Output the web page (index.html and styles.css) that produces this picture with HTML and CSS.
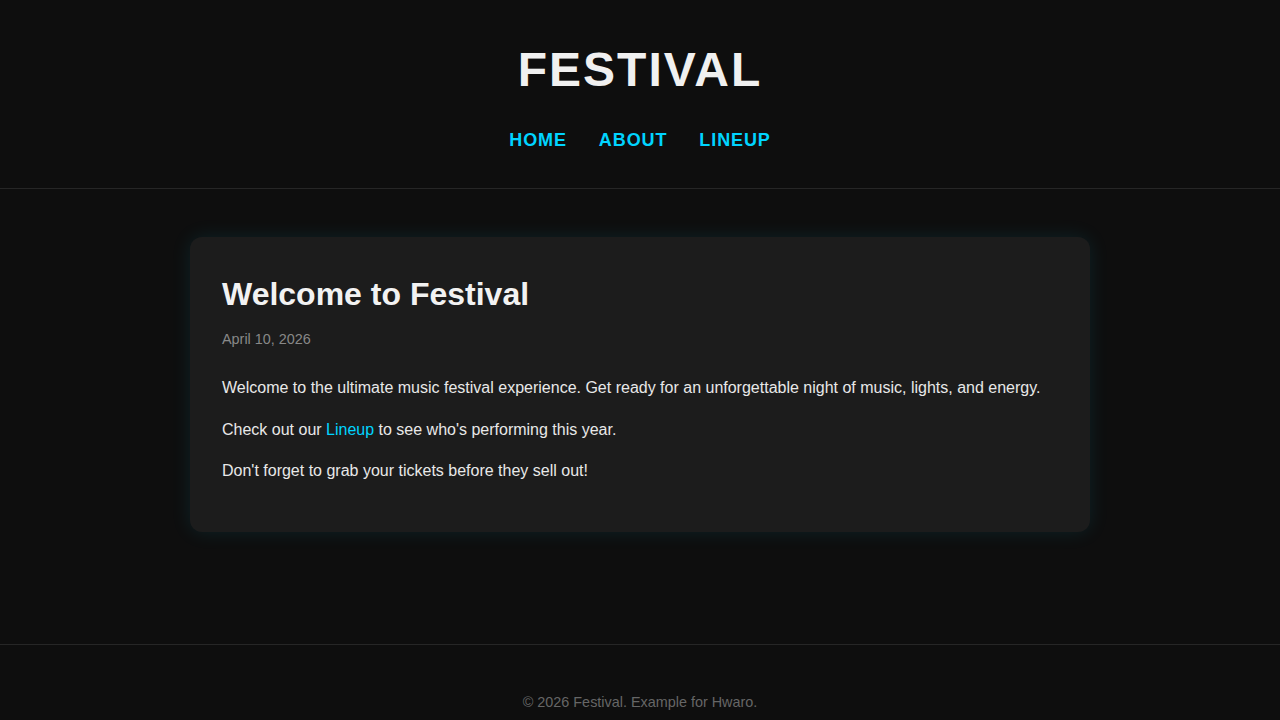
FILE: index.html
```html
<!DOCTYPE html>
<html lang="en">
<head>
  <meta charset="UTF-8">
  <title>Festival</title>
  <link rel="stylesheet" href="styles.css">
</head>
<body>
  <header class="site-header">
    <h1 class="logo">FESTIVAL</h1>
    <nav class="nav">
      <a href="#">HOME</a>
      <a href="#">ABOUT</a>
      <a href="#">LINEUP</a>
    </nav>
  </header>

  <main class="content">
    <article class="card">
      <h1>Welcome to Festival</h1>
      <div class="date">April 10, 2026</div>
      <p>Welcome to the ultimate music festival experience. Get ready for an unforgettable night of music, lights, and energy.</p>
      <p>Check out our <a href="#">Lineup</a> to see who's performing this year.</p>
      <p>Don't forget to grab your tickets before they sell out!</p>
    </article>
  </main>

  <footer class="site-footer">
    <p>&copy; 2026 Festival. Example for Hwaro.</p>
  </footer>
</body>
</html>
```

FILE: styles.css
```css
body {
  background-color: #0e0e0e;
  font-family: "Liberation Sans", Arial, sans-serif;
  color: #e8e8e8;
  line-height: 1.6;
  margin: 0;
}
a {
  color: #00d4ff;
  text-decoration: none;
}
.site-header {
  text-align: center;
  padding: 42px 20px 37px;
  border-bottom: 1px solid #262626;
}
.logo {
  font-size: 48px;
  line-height: 1.15;
  letter-spacing: 2px;
  color: #f0f0f0;
  margin: 0 0 33px;
}
.nav {
  display: flex;
  justify-content: center;
  gap: 32px;
}
.nav a {
  font-size: 18px;
  font-weight: bold;
  letter-spacing: 0.05em;
  line-height: 1.15;
}
.content {
  max-width: 900px;
  margin: 0 auto;
  padding: 48px 0;
}
.card {
  background-color: #1c1c1c;
  border-radius: 12px;
  padding: 32px;
  box-shadow: 0 0 20px rgba(0, 212, 255, 0.1);
}
.card h1 {
  font-size: 32px;
  color: #f2f2f2;
  margin: 0 0 8px;
}
.date {
  font-size: 14.4px;
  color: #888;
  margin-bottom: 24px;
}
.card p {
  margin: 16px 0;
}
.card p:last-child {
  margin-bottom: 0;
}
.card p:last-child::after {
  content: "";
  display: block;
  height: 16px;
}
.site-footer {
  margin-top: 64px;
  border-top: 1px solid #262626;
  text-align: center;
  padding: 46px 20px 20px;
}
.site-footer p {
  margin: 0;
  font-size: 14.4px;
  color: #666;
}
```
